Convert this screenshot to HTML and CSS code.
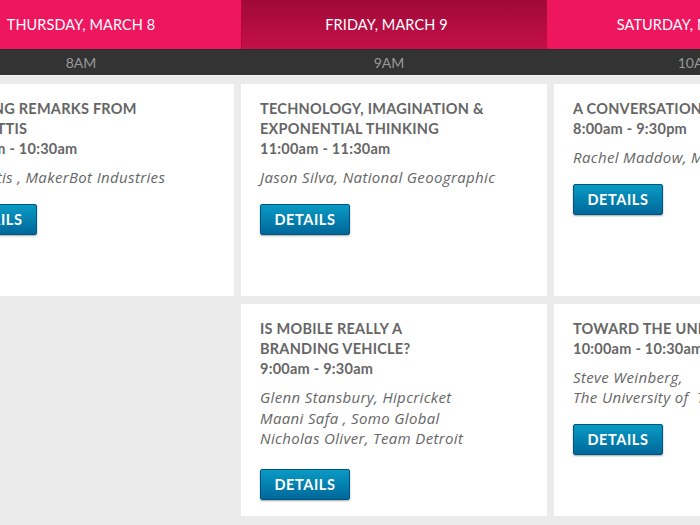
FILE: index.html
```html
<!DOCTYPE html>
<html>
<head>
<meta charset="utf-8">
<link rel="stylesheet" href="styles.css">
</head>
<body>
<div class="page">
  <div class="days">
    <div class="day">THURSDAY, MARCH 8</div>
    <div class="day day-active">FRIDAY, MARCH 9</div>
    <div class="day">SATURDAY, MARCH 10</div>
  </div>
  <div class="hours">
    <div class="hour">8AM</div>
    <div class="hour">9AM</div>
    <div class="hour">10AM</div>
  </div>
  <div class="grid">
    <div class="card">
      <div class="title">OPENING REMARKS FROM<br>BRE PETTIS</div>
      <div class="time">10:00am - 10:30am</div>
      <div class="speakers">Bre Pettis , MakerBot Industries</div>
      <a class="btn">DETAILS</a>
    </div>
    <div class="card">
      <div class="title">TECHNOLOGY, IMAGINATION &amp;<br>EXPONENTIAL THINKING</div>
      <div class="time">11:00am - 11:30am</div>
      <div class="speakers">Jason Silva, National Geoographic</div>
      <a class="btn">DETAILS</a>
    </div>
    <div class="card">
      <div class="title">A CONVERSATION WITH RACHEL MADDOW</div>
      <div class="time">8:00am - 9:30pm</div>
      <div class="speakers">Rachel Maddow, MSNBC</div>
      <a class="btn">DETAILS</a>
    </div>
    <div class="empty"></div>
    <div class="card">
      <div class="title">IS MOBILE REALLY A<br>BRANDING VEHICLE?</div>
      <div class="time">9:00am - 9:30am</div>
      <div class="speakers speakers-multi">Glenn Stansbury, Hipcricket<br>Maani Safa , Somo Global<br>Nicholas Oliver, Team Detroit</div>
      <a class="btn">DETAILS</a>
    </div>
    <div class="card">
      <div class="title">TOWARD THE UNIVERSE OF EVERYTHING</div>
      <div class="time">10:00am - 10:30am</div>
      <div class="speakers">Steve Weinberg,<br>The University of&nbsp; Texas</div>
      <a class="btn">DETAILS</a>
    </div>
  </div>
</div>
</body>
</html>
```
FILE: styles.css
```css
* { box-sizing: border-box; }
html, body { margin: 0; padding: 0; }
body {
  width: 700px;
  height: 525px;
  overflow: hidden;
  background: #ebebeb;
  font-family: Lato, "Open Sans", sans-serif;
}
.page { width: 700px; overflow: hidden; }
.days {
  display: flex;
  height: 49px;
  margin-left: -66px;
  background: #ef1660;
}
.day {
  flex: 0 0 307px;
  display: flex;
  align-items: center;
  justify-content: center;
  padding-right: 13px;
  color: #fff;
  font-size: 14.5px;
  letter-spacing: 0.1px;
  white-space: nowrap;
}
.day-active {
  flex-basis: 306px;
  padding-right: 16px;
  background: linear-gradient(#a00939, #c41049);
  border-left: 1px solid #b00c40;
}
.hours {
  display: flex;
  height: 27px;
  margin-left: -73px;
  background: #333;
  border-top: 1px solid #2a2a2a;
  border-bottom: 1px solid #f6f6f6;
}
.hour {
  flex: 0 0 308px;
  display: flex;
  align-items: center;
  justify-content: center;
  color: #999;
  font-size: 14px;
  white-space: nowrap;
}
.grid {
  display: grid;
  grid-template-columns: repeat(3, 306px);
  grid-auto-rows: 212px;
  gap: 8px 7px;
  margin-left: -72px;
  padding-top: 8px;
}
.card {
  background: #fff;
  padding: 15px 19px 0;
  color: #666;
  white-space: nowrap;
}
.title, .time {
  font-weight: 700;
  font-size: 14.5px;
  line-height: 20px;
  letter-spacing: 0.25px;
}
.speakers {
  margin-top: 8px;
  font-family: "Open Sans", Lato, sans-serif;
  font-style: italic;
  font-size: 15px;
  line-height: 20px;
  letter-spacing: 0.35px;
}
.speakers-multi { line-height: 20.5px; }
.btn {
  display: inline-flex;
  align-items: center;
  justify-content: center;
  margin-top: 17px;
  width: 90px;
  height: 31px;
  border: 1px solid #00557f;
  border-radius: 2px;
  background: linear-gradient(#0a9ac4, #00689a);
  box-shadow: 0 1px 2px rgba(0,0,0,0.35);
  color: #fff;
  font-weight: 700;
  font-size: 14.5px;
  letter-spacing: 0.6px;
}
.speakers-multi + .btn { margin-top: 20px; }
```
